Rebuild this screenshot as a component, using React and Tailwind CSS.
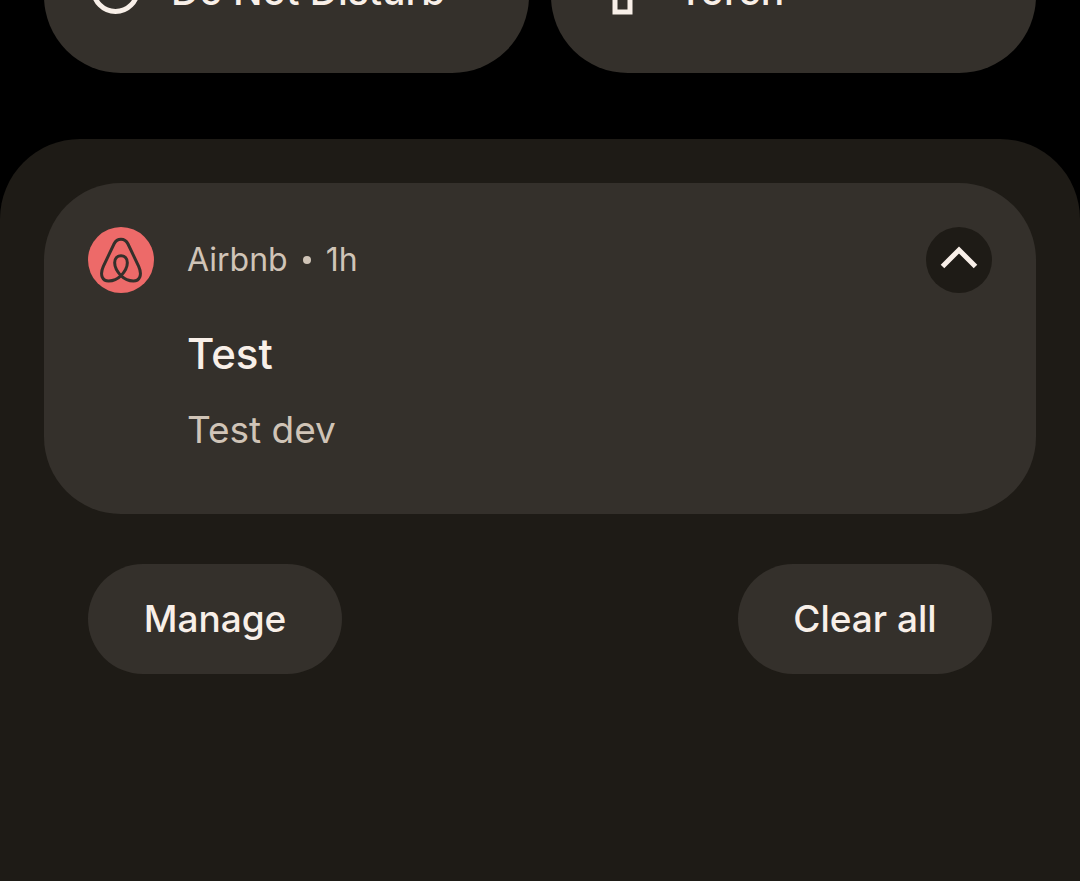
const tiles = [
  { label: 'Do Not Disturb', Icon: DisturbIcon },
  { label: 'Torch', Icon: TorchIcon },
];

function DisturbIcon() {
  return (
    <svg viewBox="0 0 55 55" className="size-[55px] shrink-0" fill="none" stroke="currentColor" strokeWidth="5" aria-hidden="true">
      <circle cx="27.5" cy="27.5" r="22" />
      <path d="M16 27.5h23" />
    </svg>
  );
}

function TorchIcon() {
  return (
    <svg viewBox="0 0 55 55" className="size-[55px] shrink-0" fill="none" stroke="currentColor" strokeWidth="5" aria-hidden="true">
      <path d="M15 5h25v9l-5 8v28H20V22l-5-8z" />
    </svg>
  );
}

function AirbnbLogo() {
  return (
    <svg viewBox="0 0 198 198" className="size-[66px] shrink-0" aria-hidden="true">
      <circle cx="99" cy="99" r="99" fill="#ed6a69" />
      <path
        d="M99 37C90 37 83 41 78 51L46 118C34 145 44 162 62 162C80 162 92 153 99 146C111 133 118 120 118 107C118 94 110 86 99 86C88 86 80 94 80 107C80 120 87 133 99 146C106 153 118 162 136 162C154 162 164 145 152 118L120 51C115 41 108 37 99 37Z"
        fill="none"
        stroke="#34302b"
        strokeWidth="9"
        strokeLinejoin="round"
      />
    </svg>
  );
}

function Tile({ label, Icon }) {
  return (
    <button className="flex h-[168px] flex-1 items-center gap-7 rounded-[77px] bg-[#34302b] pl-11 text-[39px] leading-[48px] font-medium">
      <Icon />
      <span className="pt-1">{label}</span>
    </button>
  );
}

function Notification() {
  return (
    <article className="flex gap-[33px] rounded-[77px] bg-[#34302b] px-11 pt-11 pb-[58px]">
      <AirbnbLogo />
      <div className="flex-1">
        <p className="flex h-[66px] items-center gap-[15px] text-[32px] text-[#d0c4b7]">
          <span>Airbnb</span>
          <span className="size-2 rounded-full bg-[#d0c4b7]" />
          <span>1h</span>
        </p>
        <h2 className="mt-[33px] text-[42px] leading-[56px] font-medium">Test</h2>
        <p className="mt-[22px] text-[37px] leading-[52px] text-[#d0c4b7]">Test dev</p>
      </div>
      <button aria-label="Collapse" className="size-[66px] shrink-0 rounded-full bg-[#1e1b16]">
        <svg viewBox="0 0 66 66" fill="none" stroke="currentColor" strokeWidth="5" aria-hidden="true">
          <path d="M16.5 39.5L33 23L49.5 39.5" />
        </svg>
      </button>
    </article>
  );
}

function FooterButton({ children }) {
  return (
    <button className="h-[110px] min-w-[254px] rounded-full bg-[#34302b] px-11 text-[37px] font-medium">
      {children}
    </button>
  );
}

export default function App() {
  return (
    <div className="flex h-screen flex-col overflow-hidden bg-black font-['Inter','Liberation_Sans',sans-serif] text-[#f8efe8]">
      <div className="-mt-[95px] flex shrink-0 gap-[22px] px-11">
        {tiles.map((tile) => (
          <Tile key={tile.label} {...tile} />
        ))}
      </div>
      <main className="mt-[66px] flex-1 rounded-t-[80px] bg-[#1e1b16] px-11 pt-11">
        <Notification />
        <div className="mt-[50px] flex justify-between px-11">
          <FooterButton>Manage</FooterButton>
          <FooterButton>Clear all</FooterButton>
        </div>
      </main>
    </div>
  );
}
